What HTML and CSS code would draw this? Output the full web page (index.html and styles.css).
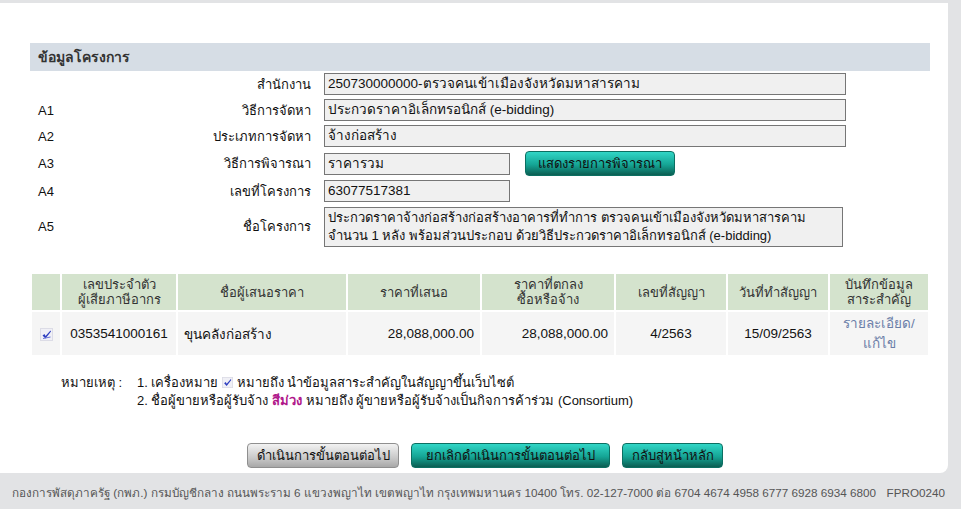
FILE: index.html
```html
<!DOCTYPE html>
<html lang="th">
<head>
  <meta charset="UTF-8" />
  <title>ข้อมูลโครงการ</title>
  <link rel="stylesheet" href="styles.css">
</head>
<body>

  <div class="page">
    <div class="section-title">ข้อมูลโครงการ</div>

    <div class="form">
      <div class="row">
        <span class="code"></span>
        <span class="label">สำนักงาน</span>
        <div class="field wide">250730000000-ตรวจคนเข้าเมืองจังหวัดมหาสารคาม</div>
      </div>
      <div class="row">
        <span class="code">A1</span>
        <span class="label">วิธีการจัดหา</span>
        <div class="field wide">ประกวดราคาอิเล็กทรอนิกส์ (e-bidding)</div>
      </div>
      <div class="row">
        <span class="code">A2</span>
        <span class="label">ประเภทการจัดหา</span>
        <div class="field wide">จ้างก่อสร้าง</div>
      </div>
      <div class="row">
        <span class="code">A3</span>
        <span class="label">วิธีการพิจารณา</span>
        <div class="field short">ราคารวม</div>
        <button class="btn btn-green btn-show">แสดงรายการพิจารณา</button>
      </div>
      <div class="row">
        <span class="code">A4</span>
        <span class="label">เลขที่โครงการ</span>
        <div class="field short">63077517381</div>
      </div>
      <div class="row">
        <span class="code">A5</span>
        <span class="label">ชื่อโครงการ</span>
        <div class="field area">ประกวดราคาจ้างก่อสร้างก่อสร้างอาคารที่ทำการ ตรวจคนเข้าเมืองจังหวัดมหาสารคาม<br>จำนวน 1 หลัง พร้อมส่วนประกอบ ด้วยวิธีประกวดราคาอิเล็กทรอนิกส์ (e-bidding)</div>
      </div>
    </div>

    <table class="bidders">
      <thead>
        <tr>
          <th class="c-check"></th>
          <th class="c-tax">เลขประจำตัว<br>ผู้เสียภาษีอากร</th>
          <th class="c-name">ชื่อผู้เสนอราคา</th>
          <th class="c-price">ราคาที่เสนอ</th>
          <th class="c-price">ราคาที่ตกลง<br>ซื้อหรือจ้าง</th>
          <th class="c-no">เลขที่สัญญา</th>
          <th class="c-date">วันที่ทำสัญญา</th>
          <th class="c-rec">บันทึกข้อมูล<br>สาระสำคัญ</th>
        </tr>
      </thead>
      <tbody>
        <tr>
          <td class="center">
            <svg class="tick" width="13" height="13" viewBox="0 0 13 13">
              <rect x="0.5" y="0.5" width="12" height="12" fill="#f0f0f6" stroke="#dcdce6"/>
              <path d="M2.5 7.5 L4.5 6 L5.5 8 L10.5 2.5 L11 3.5 L5.5 10.5 Z" fill="#2f3fc0"/>
              <path d="M3 10.5 L10.5 9" stroke="#6a74d8" stroke-width="1"/>
            </svg>
          </td>
          <td class="center">0353541000161</td>
          <td>ขุนคลังก่อสร้าง</td>
          <td class="right">28,088,000.00</td>
          <td class="right">28,088,000.00</td>
          <td class="center">4/2563</td>
          <td class="center">15/09/2563</td>
          <td class="center"><a href="#" class="link">รายละเอียด/<br>แก้ไข</a></td>
        </tr>
      </tbody>
    </table>

    <div class="notes">
      <div class="note-line">
        <span class="note-head">หมายเหตุ :</span>
        <span>1. เครื่องหมาย
          <svg class="tick-small" width="11" height="11" viewBox="0 0 13 13">
            <rect x="0.5" y="0.5" width="12" height="12" fill="#f0f0f6" stroke="#dcdce6"/>
            <path d="M2.5 7.5 L4.5 6 L5.5 8 L10.5 2.5 L11 3.5 L5.5 10.5 Z" fill="#2f3fc0"/>
          </svg>
          หมายถึง นำข้อมูลสาระสำคัญในสัญญาขึ้นเว็บไซต์</span>
      </div>
      <div class="note-line">
        <span class="note-head"></span>
        <span>2. ชื่อผู้ขายหรือผู้รับจ้าง <b class="purple">สีม่วง</b> หมายถึง ผู้ขายหรือผู้รับจ้างเป็นกิจการค้าร่วม (Consortium)</span>
      </div>
    </div>

    <div class="actions">
      <button class="btn btn-gray btn-next">ดำเนินการขั้นตอนต่อไป</button>
      <button class="btn btn-green btn-cancel">ยกเลิกดำเนินการขั้นตอนต่อไป</button>
      <button class="btn btn-green btn-home">กลับสู่หน้าหลัก</button>
    </div>
  </div>

  <div class="footer">
    <span>กองการพัสดุภาครัฐ (กพภ.) กรมบัญชีกลาง ถนนพระราม 6 แขวงพญาไท เขตพญาไท กรุงเทพมหานคร 10400 โทร. 02-127-7000 ต่อ 6704 4674 4958 6777 6928 6934 6800</span>
    <span>FPRO0240</span>
  </div>

</body>
</html>
```

FILE: styles.css
```css
* {
  box-sizing: border-box;
  margin: 0;
  padding: 0;
}

body {
  background: #e2e3e5;
  font-family: "Liberation Sans", Arial, sans-serif;
  font-size: 13px;
  color: #111;
  overflow: hidden;
}

.page {
  background: white;
  width: 948px;
  margin-top: 3px;
  padding: 40px 18px 4px 30px;
  border-bottom-right-radius: 8px;
  height: 470px;
}

.section-title {
  background: #d6dde5;
  height: 28px;
  line-height: 28px;
  padding-left: 8px;
  font-weight: bold;
  color: #333;
  font-size: 14px;
}

.form {
  padding-top: 2px;
}

.row {
  display: flex;
  align-items: center;
  margin-bottom: 4px;
}

.code {
  width: 40px;
  padding-left: 8px;
}

.label {
  width: 254px;
  text-align: right;
  padding-right: 13px;
}

.field {
  background: #f0f0f0;
  border: 1px solid #767676;
  height: 22px;
  line-height: 20px;
  padding: 0 3px;
  white-space: nowrap;
  font-size: 13.5px;
}

.wide {
  width: 522px;
}

.short {
  width: 186px;
}

.area {
  width: 519px;
  height: 40px;
  line-height: 18px;
  padding-top: 1px;
  margin-top: 1px;
  font-size: 13px;
}

.btn {
  font-family: "Liberation Sans", Arial, sans-serif;
  font-size: 13px;
  height: 25px;
  border-radius: 4px;
  cursor: pointer;
  padding: 0;
  color: #111;
  white-space: nowrap;
}

.btn-green {
  background: linear-gradient(#31d6c6, #15a595 55%, #0b5e52);
  border: 1px solid #0c6f62;
}

.btn-gray {
  background: linear-gradient(#f2f2f2, #c9c9c9 60%, #a8a8a8);
  border: 1px solid #8f8f8f;
}

.btn-show {
  width: 150px;
  margin-left: 15px;
}

.btn-next { width: 152px; }
.btn-cancel { width: 199px; }
.btn-home { width: 101px; }

.bidders {
  margin-top: 25px;
  width: 900px;
  border-spacing: 2px;
}

.bidders th {
  background: #d4e3cd;
  font-weight: normal;
  color: #333;
  height: 36px;
  line-height: 15px;
  padding: 0 3px;
}

.bidders td {
  background: #f5f5f5;
  height: 43px;
  padding: 0 6px;
  font-size: 13.5px;
}

.c-check { width: 28px; }
.c-tax { width: 114px; }
.c-name { width: 168px; }
.c-price { width: 132px; }
.c-no { width: 110px; }
.c-date { width: 100px; }
.c-rec { width: 98px; }

.center {
  text-align: center;
}

.right {
  text-align: right;
}

.bidders td.center:first-child {
  padding: 0;
}

.tick {
  vertical-align: middle;
}

.link {
  color: #6b7ea8;
  text-decoration: none;
  font-size: 13.5px;
  line-height: 20px;
}

.notes {
  margin-top: 17px;
  font-size: 13px;
}

.note-line {
  display: flex;
  height: 18px;
  line-height: 18px;
}

.note-head {
  width: 107px;
  padding-left: 31px;
}

.tick-small {
  vertical-align: -1px;
}

.purple {
  color: #b0168a;
}

.actions {
  display: flex;
  justify-content: center;
  gap: 12px;
  margin-top: 33px;
  padding-left: 10px;
}

.footer {
  display: flex;
  justify-content: space-between;
  padding: 0 16px 0 12px;
  height: 36px;
  line-height: 40px;
  color: #555;
  font-size: 11.7px;
  white-space: nowrap;
}
```
